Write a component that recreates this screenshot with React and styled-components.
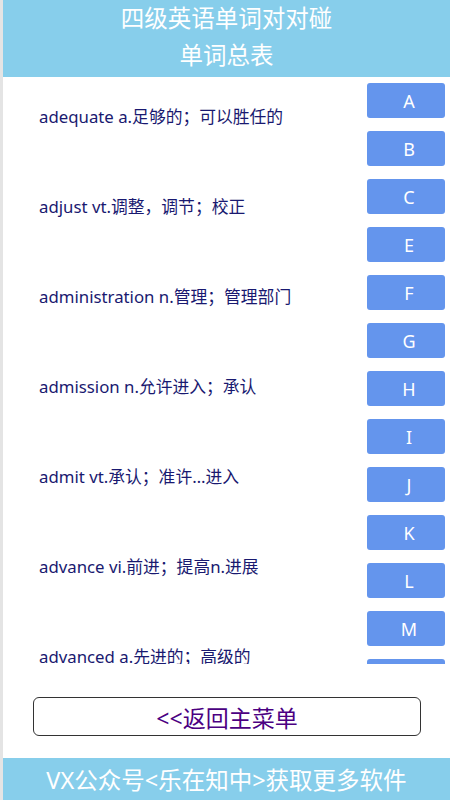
import React from 'react';
import styled, { createGlobalStyle } from 'styled-components';

const GlobalStyle = createGlobalStyle`
  html, body {
    margin: 0;
    padding: 0;
    background: #fff;
  }
  body {
    font-family: "Noto Sans", "Noto Sans CJK SC", sans-serif;
  }
`;

const Page = styled.div`
  width: 450px;
  height: 800px;
  box-sizing: border-box;
  border-left: 3px solid #e4e4e4;
  display: flex;
  flex-direction: column;
  overflow: hidden;
`;

const Header = styled.header`
  height: 77px;
  box-sizing: border-box;
  padding-top: 0;
  background: #87ceeb;
  color: #fff;
  display: flex;
  flex-direction: column;
  align-items: center;
  font-size: 23.5px;
  line-height: 37px;
`;

const Body = styled.div`
  height: 587px;
  display: flex;
  overflow: hidden;
`;

const WordList = styled.ul`
  flex: 1;
  margin: 0;
  padding: 30px 0 0 36px;
  list-style: none;
`;

const Word = styled.li`
  height: 90px;
  font-size: 16.8px;
  line-height: 20px;
  color: #191970;
`;

const LetterColumn = styled.div`
  width: 78px;
  margin-right: 5px;
  padding-top: 6px;
  display: flex;
  flex-direction: column;
  gap: 13px;
`;

const LetterButton = styled.div`
  flex-shrink: 0;
  height: 35px;
  padding-left: 6px;
  border-radius: 3px;
  background: #6495ed;
  color: #fff;
  font-size: 18px;
  display: flex;
  align-items: center;
  justify-content: center;
`;

const BackButton = styled.div`
  margin: 33px 29px 0 30px;
  height: 39px;
  box-sizing: border-box;
  border: 1px solid #333;
  border-radius: 6px;
  display: flex;
  align-items: center;
  justify-content: center;
  color: #4b0082;
  font-size: 23px;
`;

const Footer = styled.footer`
  margin-top: auto;
  height: 42px;
  background: #87ceeb;
  color: #fff;
  font-size: 23.5px;
  display: flex;
  align-items: center;
  justify-content: center;
`;

const words = [
  'adequate a.足够的；可以胜任的',
  'adjust vt.调整，调节；校正',
  'administration n.管理；管理部门',
  'admission n.允许进入；承认',
  'admit vt.承认；准许…进入',
  'advance vi.前进；提高n.进展',
  'advanced a.先进的；高级的',
];

const letters = ['A', 'B', 'C', 'E', 'F', 'G', 'H', 'I', 'J', 'K', 'L', 'M', 'N'];

const App = () => {
  return (
    <>
      <GlobalStyle />
      <Page>
        <Header>
          <div>四级英语单词对对碰</div>
          <div>单词总表</div>
        </Header>
        <Body>
          <WordList>
            {words.map((w) => (
              <Word key={w}>{w}</Word>
            ))}
          </WordList>
          <LetterColumn>
            {letters.map((l) => (
              <LetterButton key={l}>{l}</LetterButton>
            ))}
          </LetterColumn>
        </Body>
        <BackButton>&lt;&lt;返回主菜单</BackButton>
        <Footer>VX公众号&lt;乐在知中&gt;获取更多软件</Footer>
      </Page>
    </>
  );
};

export default App;
